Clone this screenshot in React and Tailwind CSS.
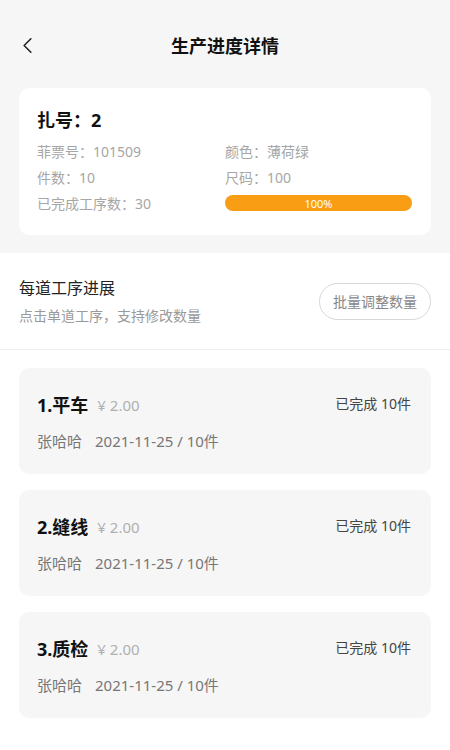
import { ChevronLeft } from 'lucide-react'

const processes = [
  { id: 1, name: '平车' },
  { id: 2, name: '缝线' },
  { id: 3, name: '质检' },
]

function InfoRow({ label, value }) {
  return (
    <div className="h-[26px] flex items-center text-[14px] text-[#a6a6a6]">
      {label}：{value}
    </div>
  )
}

function ProcessCard({ item }) {
  return (
    <div className="h-[106px] rounded-[10px] bg-[#f6f6f6] pl-[18px] pr-[20px] pt-[24px]">
      <div className="flex items-center justify-between h-[26px]">
        <div className="flex items-center gap-[9px]">
          <span className="text-[18px] font-bold text-[#111]">{item.id}.{item.name}</span>
          <span className="text-[15px] text-[#b0b0b0]">¥ 2.00</span>
        </div>
        <span className="text-[14px] text-[#444] -mt-[4px]">已完成 10件</span>
      </div>
      <div className="mt-[12px] h-[22px] flex items-center gap-[13px] text-[15px] text-[#777]">
        <span>张哈哈</span>
        <span>2021-11-25 / 10件</span>
      </div>
    </div>
  )
}

export default function App() {
  return (
    <div
      className="w-[450px] min-h-[750px] bg-white"
      style={{ fontFamily: '"Noto Sans", "Noto Sans CJK SC", sans-serif' }}
    >
      <div className="bg-[#f6f6f6] pb-[18px]">
        {/* header */}
        <div className="relative h-[88px] pt-1 flex items-center justify-center">
          <button type="button" className="absolute left-[14px] top-[32px] text-[#222]">
            <ChevronLeft size={27} strokeWidth={1.4} />
          </button>
          <h1 className="text-[18px] font-bold text-[#111]">生产进度详情</h1>
        </div>

        {/* summary card */}
        <div className="mx-[19px] rounded-[10px] bg-white px-[18px] pt-[20px] pb-[19px]">
          <div className="h-[24px] flex items-center text-[18px] font-bold text-[#111]">扎号：2</div>
          <div className="mt-[6px] grid grid-cols-2">
            <InfoRow label="菲票号" value="101509" />
            <InfoRow label="颜色" value="薄荷绿" />
            <InfoRow label="件数" value="10" />
            <InfoRow label="尺码" value="100" />
            <InfoRow label="已完成工序数" value="30" />
            <div className="h-[26px] flex items-center pr-[1px]">
              <div className="h-[16px] w-full rounded-full bg-[#f99d15] flex items-center justify-center text-[11px] text-white leading-none">
                100%
              </div>
            </div>
          </div>
        </div>
      </div>

      {/* section header */}
      <div className="flex items-center justify-between pl-[19px] pr-[19px] py-[24px] border-b border-[#efefef]">
        <div>
          <div className="h-[22px] flex items-center text-[16px] text-[#222]">每道工序进展</div>
          <div className="mt-[6px] h-[20px] flex items-center text-[14px] text-[#9a9a9a]">点击单道工序，支持修改数量</div>
        </div>
        <button
          type="button"
          className="h-[37px] w-[112px] rounded-full border border-[#d8d8d8] text-[14px] text-[#888]"
        >
          批量调整数量
        </button>
      </div>

      {/* process list */}
      <div className="px-[19px] pt-[18px] pb-[32px] flex flex-col gap-[16px]">
        {processes.map((p) => (
          <ProcessCard key={p.id} item={p} />
        ))}
      </div>
    </div>
  )
}
